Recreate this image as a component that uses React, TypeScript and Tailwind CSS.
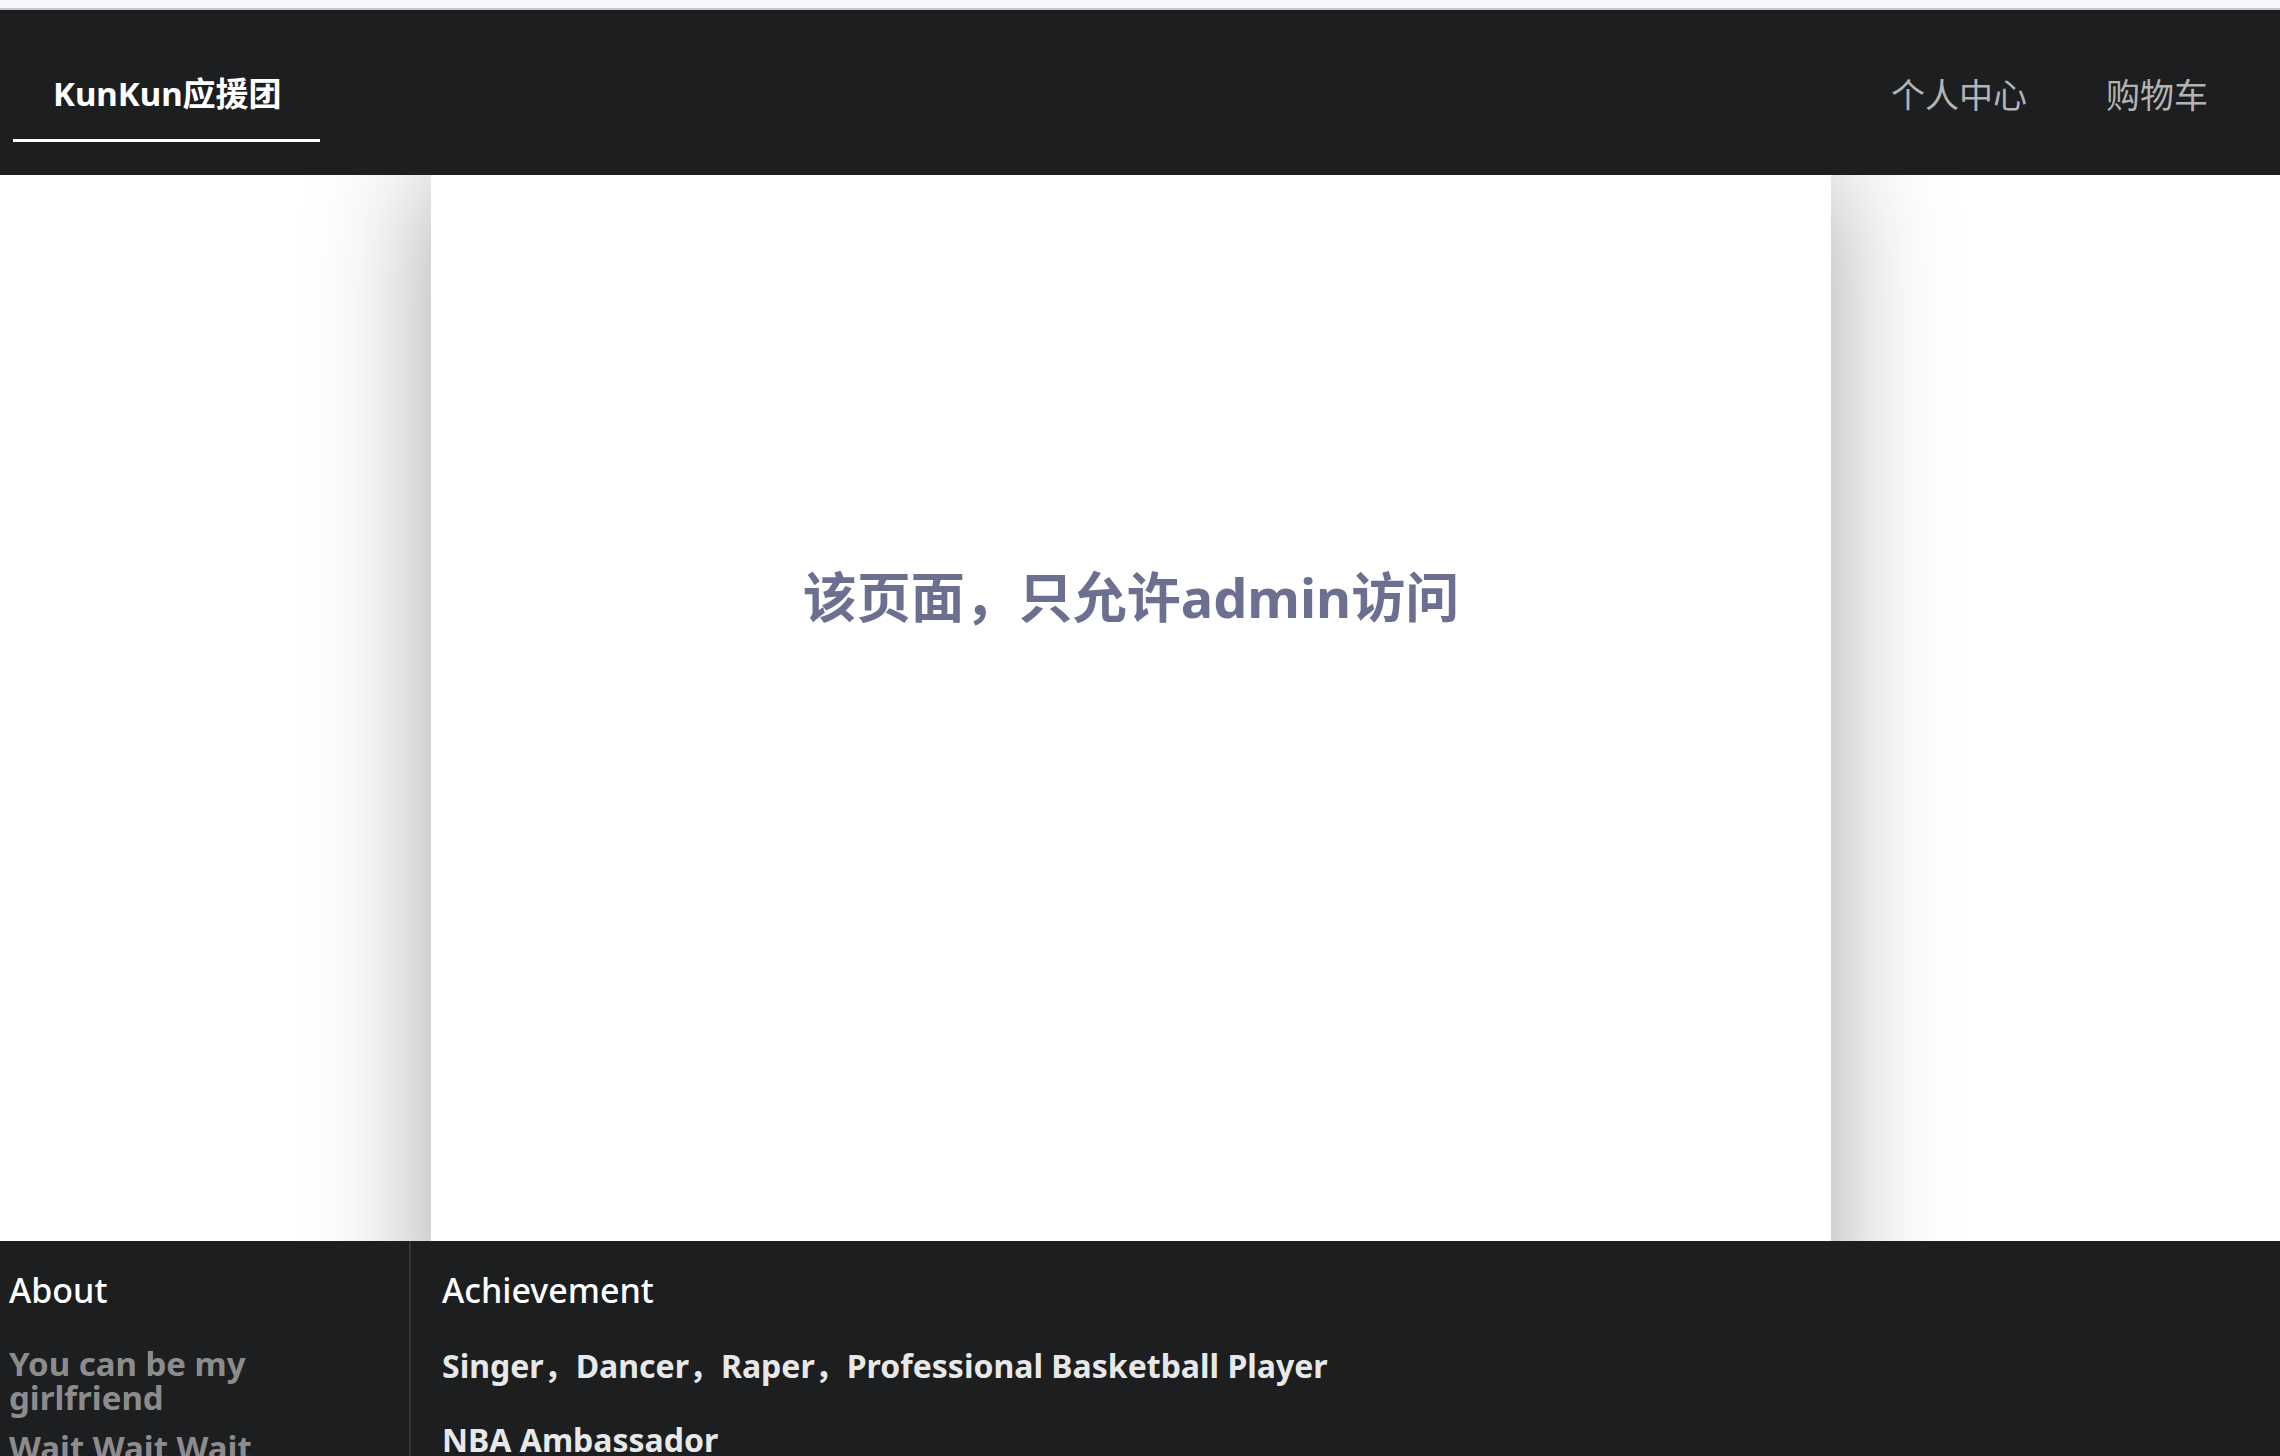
export default function App() {
  return (
    <div
      className="min-h-screen bg-white"
      style={{ fontFamily: '"Noto Sans", "Noto Sans CJK SC", sans-serif' }}
    >
      {/* browser strip */}
      <div className="h-[10px] bg-[#f7f7f9] border-b-2 border-[#c9c9cd]" />

      {/* Header */}
      <header className="relative z-10 h-[165px] bg-[#1d1e20] flex items-start justify-between">
        <div className="ml-[13px] w-[307px] pl-[40px] pt-[63px] pb-[24px] border-b-[3px] border-white">
          <span className="block text-[33px] leading-[42px] font-bold text-white">
            KunKun应援团
          </span>
        </div>
        <nav className="flex items-center gap-[79px] pr-[72px] pt-[63px]">
          <a className="text-[34px] leading-[42px] text-[#b3b3b3]" style={{ fontFamily: '"Noto Sans CJK SC", sans-serif' }}>
            个人中心
          </a>
          <a className="text-[34px] leading-[42px] text-[#b3b3b3]" style={{ fontFamily: '"Noto Sans CJK SC", sans-serif' }}>
            购物车
          </a>
        </nav>
      </header>

      {/* Main */}
      <main className="h-[1066px] bg-white">
        <div className="ml-[431px] w-[1400px] h-[1180px] bg-white shadow-[0_0_110px_rgba(0,0,0,0.36)]">
          <h2 className="pt-[384px] text-center text-[54px] leading-[76px] font-bold text-[#6b7090]">
            该页面，只允许admin访问
          </h2>
        </div>
      </main>

      {/* Footer */}
      <footer className="relative z-10 bg-[#1d1e20] flex pb-[120px]">
        <div className="w-[411px] border-r-2 border-[#333436] pl-[9px] pt-[29px]">
          <h3 className="text-[34px] leading-[40px] font-medium text-white">About</h3>
          <div className="mt-[37px] w-[290px] space-y-[16px]">
            <p className="text-[33px] leading-[34px] font-bold text-[#8c8c8c]">
              You can be my girlfriend
            </p>
            <p className="text-[33px] leading-[34px] font-bold text-[#8c8c8c]">
              Wait Wait Wait
            </p>
            <p className="text-[33px] leading-[34px] font-bold text-[#8c8c8c]">
              Chicken you are so beautiful
            </p>
          </div>
        </div>
        <div className="flex-1 pl-[31px] pt-[29px]">
          <h3 className="text-[34px] leading-[40px] font-medium text-white">Achievement</h3>
          <div className="mt-[39px] space-y-[40px]">
            <p className="text-[32px] leading-[34px] font-bold text-[#e8e8e8]">
              Singer，Dancer，Raper，Professional Basketball Player
            </p>
            <p className="text-[32px] leading-[34px] font-bold text-[#e8e8e8]">
              NBA Ambassador
            </p>
          </div>
        </div>
      </footer>
    </div>
  );
}
